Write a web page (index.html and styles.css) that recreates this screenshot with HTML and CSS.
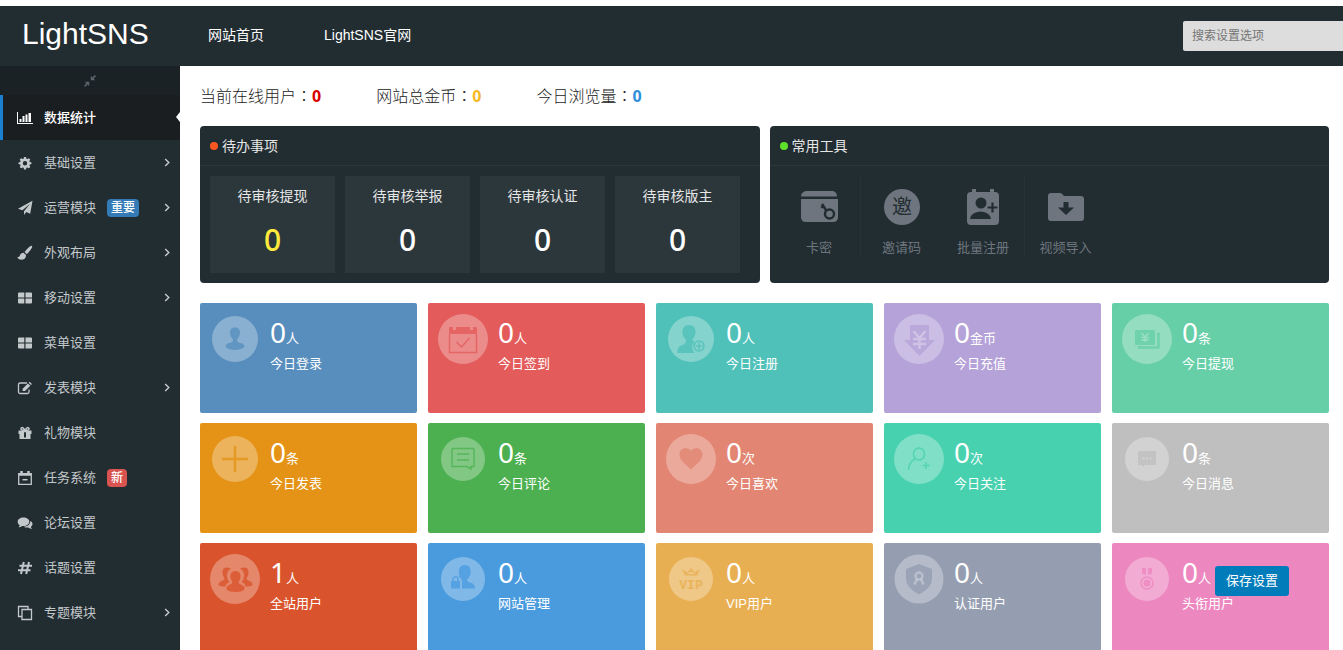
FILE: index.html
```html
<!DOCTYPE html>
<html lang="zh-CN">
<head>
<meta charset="utf-8">
<title>LightSNS</title>
<link rel="stylesheet" href="styles.css">
</head>
<body>
<div class="app">
  <header class="topbar">
    <a class="logo" href="#">LightSNS</a>
    <nav class="topnav">
      <a href="#">网站首页</a>
      <a href="#">LightSNS官网</a>
    </nav>
    <input class="search" type="text" placeholder="搜索设置选项" aria-label="搜索设置选项">
  </header>
  <div class="body">
    <aside class="sidebar">
      <button class="collapse" type="button" aria-label="收起菜单">
        <svg width="12" height="12" viewBox="0 0 12 12"><path fill="currentColor" d="M10.800 0 12 1.200 9.600 3.600 11.200 5.200H6.800V.8l1.600 1.600zM1.200 12 0 10.800l2.400-2.400L.8 6.800h4.400v4.400L3.600 9.600z"/></svg>
      </button>
      <nav class="menu">
        <a class="item active" href="#">
          <svg class="ico" viewBox="0 0 16 16"><path fill="currentColor" d="M0 2h1v11h15v1H0zM2.500 9h2v3h-2zM5.500 6h2v6h-2zM8.500 4.500h2V12h-2zM11.500 3h2.500v9h-2.500z"/></svg>
          <span>数据统计</span></a>
        <a class="item" href="#">
          <svg class="ico" viewBox="0 0 16 16"><path fill="currentColor" fill-rule="evenodd" d="M7 2h2l.4 1.700 1 .4 1.500-.9 1.400 1.400-.9 1.500.4 1L14.500 7.500v1.500l-1.700.4-.4 1 .9 1.500-1.400 1.400-1.500-.9-1 .4L9 14.500H7l-.4-1.700-1-.4-1.500.9-1.400-1.400.9-1.500-.4-1L1.500 9V7.500l1.700-.4.4-1-.9-1.500 1.400-1.400 1.500.9 1-.4zM8 6a2.200 2.200 0 1 0 0 4.400A2.200 2.200 0 0 0 8 6z"/></svg>
          <span>基础设置</span>
          <svg class="arrow" viewBox="0 0 6 10"><path d="m1 1 4 4-4 4"/></svg></a>
        <a class="item" href="#">
          <svg class="ico" viewBox="0 0 16 16"><path fill="currentColor" d="M15.500.7 13.200 13.800 9.200 12.100 7 15v-3.800l6-7.400-7.600 6.500L1 8.700z"/></svg>
          <span>运营模块</span><span class="badge blue">重要</span>
          <svg class="arrow" viewBox="0 0 6 10"><path d="m1 1 4 4-4 4"/></svg></a>
        <a class="item" href="#">
          <svg class="ico" viewBox="0 0 16 16"><path fill="currentColor" d="M13.700 1c1-.6 1.900.2 1.400 1.300-1 2.200-3 5-5.300 6.900L7.600 7C9.300 4.700 11.700 2.200 13.700 1zM6.800 7.900l2.200 2.200c.2 3-2 4.600-4.700 4.600-2 0-3.500-1.300-4-3 1.200.5 2 .2 2.500-1 .8-2 2.400-3 4-2.800z"/></svg>
          <span>外观布局</span>
          <svg class="arrow" viewBox="0 0 6 10"><path d="m1 1 4 4-4 4"/></svg></a>
        <a class="item" href="#">
          <svg class="ico" viewBox="0 0 16 16"><path fill="currentColor" d="M2 2.500h5.300v5H1V3.500q0-1 1-1zM8.500 2.500H14q1 0 1 1v4H8.500zM1 8.500h6.300v5H2q-1 0-1-1zM8.500 8.500H15v4q0 1-1 1H8.500z"/></svg>
          <span>移动设置</span>
          <svg class="arrow" viewBox="0 0 6 10"><path d="m1 1 4 4-4 4"/></svg></a>
        <a class="item" href="#">
          <svg class="ico" viewBox="0 0 16 16"><path fill="currentColor" d="M2 2.500h5.300v5H1V3.500q0-1 1-1zM8.500 2.500H14q1 0 1 1v4H8.500zM1 8.500h6.300v5H2q-1 0-1-1zM8.500 8.500H15v4q0 1-1 1H8.500z"/></svg>
          <span>菜单设置</span></a>
        <a class="item" href="#">
          <svg class="ico" viewBox="0 0 16 16"><path fill="none" stroke="currentColor" stroke-width="1.300" d="M10 3H3Q1.500 3 1.500 4.500v7.500Q1.500 13.500 3 13.500h7.500q1.500 0 1.500-1.500V9.500"/><path fill="currentColor" d="m12.600 1.700 2.400 2.400-1 1-2.400-2.400zM10.900 3.400l2.400 2.400L8 11.100H5.600V8.700z"/></svg>
          <span>发表模块</span>
          <svg class="arrow" viewBox="0 0 6 10"><path d="m1 1 4 4-4 4"/></svg></a>
        <a class="item" href="#">
          <svg class="ico" viewBox="0 0 16 16"><path fill="none" stroke="currentColor" stroke-width="1.500" d="M8 6C7 3 5.500 2.200 4.500 2.800S3.500 5.500 8 5.800C12.500 5.500 12.500 3.400 11.500 2.800S9 3 8 6z"/><path fill="currentColor" fill-rule="evenodd" d="M1.500 5.500h13V9h-1v5h-11V9h-1zM7 7v5.500h2V7z"/></svg>
          <span>礼物模块</span></a>
        <a class="item" href="#">
          <svg class="ico" viewBox="0 0 16 16"><path fill="none" stroke="currentColor" stroke-width="1.300" d="M1.700 3.700h12.600v10.600H1.700z"/><path fill="none" stroke="currentColor" stroke-width="2.500" d="M4.500 1v4M11.500 1v4M2 4.500h12"/><path stroke="currentColor" stroke-width="1.500" d="M5.500 9.700h5"/></svg>
          <span>任务系统</span><span class="badge red">新</span></a>
        <a class="item" href="#">
          <svg class="ico" viewBox="0 0 16 16"><path fill="currentColor" d="M6.500 2.500c3.300 0 5.800 1.900 5.800 4.200S9.800 11 6.500 11l-1.200-.1Q3.500 12.200 1.600 12.300q1-1 1-2.200C1.300 9.300.7 8 .7 6.700c0-2.300 2.500-4.200 5.800-4.200zM13.300 6c1.400.7 2.200 1.700 2.200 3s-.7 2-1.700 2.700q.1 1.100 1.200 2.200-2-.1-3.700-1.400c-1.800.2-3.400-.1-4.500-.8 3.500 0 6.700-2.200 6.500-5.700z"/></svg>
          <span>论坛设置</span></a>
        <a class="item" href="#">
          <svg class="ico" viewBox="0 0 16 16"><path fill="none" stroke="currentColor" stroke-width="2" d="M6.800 2 4 14M12 2 9.200 14M2.500 5.700H15M1 10.300h12.500"/></svg>
          <span>话题设置</span></a>
        <a class="item" href="#">
          <svg class="ico" viewBox="0 0 16 16"><path fill="none" stroke="currentColor" stroke-width="1.300" d="M5 4.500h9.500v10H5zM5 11.500H1.500v-10H11v3"/></svg>
          <span>专题模块</span>
          <svg class="arrow" viewBox="0 0 6 10"><path d="m1 1 4 4-4 4"/></svg></a>
      </nav>
    </aside>
    <main class="main">
      <div class="stats">
        <p>当前在线用户<span class="colon" lang="zh-TW">：</span><b class="c-red">0</b></p>
        <p>网站总金币<span class="colon" lang="zh-TW">：</span><b class="c-gold">0</b></p>
        <p>今日浏览量<span class="colon" lang="zh-TW">：</span><b class="c-blue">0</b></p>
      </div>
      <div class="panels">
        <section class="panel">
          <h2 class="todo-title">待办事项</h2>
          <div class="todos">
            <a class="todo" href="#">待审核提现<strong class="hot">0</strong></a>
            <a class="todo" href="#">待审核举报<strong>0</strong></a>
            <a class="todo" href="#">待审核认证<strong>0</strong></a>
            <a class="todo" href="#">待审核版主<strong>0</strong></a>
          </div>
        </section>
        <section class="panel">
          <h2 class="tool-title">常用工具</h2>
          <div class="tools">
            <a class="tool" href="#">
              <svg viewBox="0 0 40 40"><path fill="currentColor" d="M7 4h27q4 1 4 5.500H2Q2 5 7 4zM2 12h37v18q0 5-5 5H7q-5 0-5-5z"/><g fill="none" stroke="#222d32" stroke-width="2.500"><circle cx="30.500" cy="27" r="4.500"/><path d="m27.500 24-4.500-7M22 20.500l3-1.500"/></g></svg>
              <span>卡密</span></a>
            <a class="tool" href="#">
              <svg viewBox="0 0 40 40"><circle cx="20" cy="20" r="18" fill="currentColor"/><text class="seal" x="20" y="27" text-anchor="middle">邀</text></svg>
              <span>邀请码</span></a>
            <a class="tool" href="#">
              <svg viewBox="0 0 40 40"><path fill="currentColor" d="M9 2h4v3h14V2h4v3h1q4 0 4 4v25q0 4-4 4H8q-4 0-4-4V9q0-4 4-4h1z"/><circle cx="18" cy="16" r="5.500" fill="#222d32"/><path fill="#222d32" d="M7 32q1-7 10.500-7.500Q27 25 28 32z"/><path stroke="#222d32" stroke-width="2.200" d="M29.500 15.500v10M24.500 20.500h10"/></svg>
              <span>批量注册</span></a>
            <a class="tool" href="#">
              <svg viewBox="0 0 40 40"><path fill="currentColor" d="M5 6h9q2 0 3 2l1 1h17q3 0 3 3v19q0 3-3 3H5q-3 0-3-3V9q0-3 3-3z"/><path fill="#222d32" d="M17.500 15h5v5.500H28l-8 7.500-8-7.500h5.500z"/></svg>
              <span>视频导入</span></a>
          </div>
        </section>
      </div>
      <div class="cards">
        <a class="card login" href="#">
          <svg viewBox="0 0 50 50"><circle class="disc" cx="25" cy="25" r="23"/><path class="glyph" d="M25 13.500c3.500 0 5.300 2.500 5 6q-.5 3.500-3 6 0 3 3.500 3.500 4 1 4 3.700-3.500 3.300-9.500 3.300t-9.500-3.300q0-2.700 4-3.700 3.500-.5 3.500-3.500-2.500-2.500-3-6c-.3-3.500 1.500-6 5-6z"/></svg>
          <div><p><strong>0</strong>人</p><span>今日登录</span></div></a>
        <a class="card sign" href="#">
          <svg viewBox="0 0 50 50"><circle class="disc" cx="25" cy="25" r="25"/><path class="glyph" d="M12 13h3v3h3v-3h14v3h3v-3h3q1 0 1 1v6H11v-6q0-1 1-1z"/><path class="line" d="M11.500 20v18.500h27V20M18.500 28l5 5 8-9"/></svg>
          <div><p><strong>0</strong>人</p><span>今日签到</span></div></a>
        <a class="card register" href="#">
          <svg viewBox="0 0 50 50"><circle class="disc" cx="25" cy="25" r="23"/><path class="glyph" d="M23 11c4.500 0 7 3 6.500 8q-.5 4-3 6 0 2 2 3a7 7 0 0 0 .5 11H11.500q-1-6 4-7.500 5-1.500 4.500-6-3-2-3.500-6.500C16 14 18.500 11 23 11z"/><circle class="line" cx="33" cy="32" r="5"/><path class="line" d="M33 28.500v7M29.500 32h7"/></svg>
          <div><p><strong>0</strong>人</p><span>今日注册</span></div></a>
        <a class="card recharge" href="#">
          <svg viewBox="0 0 50 50"><circle class="disc" cx="25" cy="25" r="25"/><path class="glyph" d="M17 11h17q1 0 1 1v14h6L25.500 42 10 26h6V12q0-1 1-1z"/><path class="yen" d="m19.500 17 6 7 6-7M25.500 24v11M19 25h13M19 30h13"/></svg>
          <div><p><strong>0</strong>金币</p><span>今日充值</span></div></a>
        <a class="card withdraw" href="#">
          <svg viewBox="0 0 50 50"><circle class="disc" cx="25" cy="25" r="25"/><rect class="glyph" x="13" y="16" width="20" height="15" rx="1"/><path class="line thick" d="M35 20h1.500v13.500H17V32"/><path class="yen thin" d="m19.500 19 3.500 4 3.500-4M23 23v5M19.500 23.500h7M19.500 26h7"/></svg>
          <div><p><strong>0</strong>条</p><span>今日提现</span></div></a>
        <a class="card publish" href="#">
          <svg viewBox="0 0 50 50"><circle class="disc" cx="25" cy="25" r="23"/><path class="line thick" d="M25 12v26M12 25h26"/></svg>
          <div><p><strong>0</strong>条</p><span>今日发表</span></div></a>
        <a class="card comment" href="#">
          <svg viewBox="0 0 50 50"><circle class="disc" cx="25" cy="25" r="22"/><path class="line" d="M15 14.500h20q1 0 1 1v17h-3v2.500l-4-2.500H14v-17q0-1 1-1zM19 20h12M19 26h12"/></svg>
          <div><p><strong>0</strong>条</p><span>今日评论</span></div></a>
        <a class="card like" href="#">
          <svg viewBox="0 0 50 50"><circle class="disc" cx="25" cy="25" r="25"/><path class="glyph" d="M25 17c2-4 11-4 11.500 3 .4 6-6 10-11.500 15.500C19.500 30 13 26 13.500 20c.5-7 9.500-7 11.500-3z"/></svg>
          <div><p><strong>0</strong>次</p><span>今日喜欢</span></div></a>
        <a class="card follow" href="#">
          <svg viewBox="0 0 50 50"><circle class="disc" cx="25" cy="25" r="25"/><ellipse class="line" cx="25" cy="20" rx="5.500" ry="6"/><path class="line" d="M21 25q-6 3-6.500 11M32 28v7M28.500 31.500h7"/></svg>
          <div><p><strong>0</strong>次</p><span>今日关注</span></div></a>
        <a class="card message" href="#">
          <svg viewBox="0 0 50 50"><circle class="disc" cx="25" cy="25" r="22"/><path class="glyph" d="M17 17h16q1 0 1 1v12q0 1-1 1H23l-2 2-1-2h-3q-1 0-1-1V18q0-1 1-1z"/><path class="yen thin" stroke-dasharray="2 1.500" d="M20.500 24.500h9"/></svg>
          <div><p><strong>0</strong>条</p><span>今日消息</span></div></a>
        <a class="card users" href="#">
          <svg viewBox="0 0 50 50"><circle class="disc" cx="25" cy="25" r="25"/><path class="glyph" d="M25.500 17c4 0 5.500 3 5 6.500q-.5 3-2 4.500 0 2 3 2.700 3.500 1.300 3 4.800-3 2.500-9 2.500t-9-2.500q-.5-3.500 3-4.800 3-.7 3-2.700-1.500-1.500-2-4.500c-.5-3.500 1-6.500 5-6.500zM21 14.500q-4.500 2.500-4 8 .5 4 2.500 5.500-3.500 1-4 4.500-5 0-7-1.500 0-3 3-4 3-.7 3-2.500-2.500-3-2-7 .8-6 8.500-3zM30 14.500q4.500 2.500 4 8-.5 4-2.500 5.500 3.500 1 4 4.500 5 0 7-1.500 0-3-3-4-3-.7-3-2.500 2.500-3 2-7-.8-6-8.500-3z"/></svg>
          <div><p><strong>1</strong>人</p><span>全站用户</span></div></a>
        <a class="card admin" href="#">
          <svg viewBox="0 0 50 50"><circle class="disc" cx="25" cy="25" r="22"/><path class="glyph" d="M27 11c4 0 6 3 5.500 7q1 1-.5 3-1 3-3 4.500.5 3 4.500 3.500 3.500 1 3.500 5.500H24v-8q-1-3-3.500-4 .5-1 1-2-1.500-1-.5-2.500C20.500 14 23 11 27 11zM13 27h9v7.500h-9z"/><path class="line" d="M15 27v-2.500q2.500-3.500 5 0V27"/></svg>
          <div><p><strong>0</strong>人</p><span>网站管理</span></div></a>
        <a class="card vip" href="#">
          <svg viewBox="0 0 50 50"><circle class="disc" cx="25" cy="25" r="22"/><path class="glyph" d="m16 15 5.500 3.500L25 14l3.500 4.500L34 15l-3 6.500H19zm4.500 5h9L25 17.500z" fill-rule="evenodd"/><text class="glyph viptext" x="25" y="35" text-anchor="middle">VIP</text></svg>
          <div><p><strong>0</strong>人</p><span>VIP用户</span></div></a>
        <a class="card verify" href="#">
          <svg viewBox="0 0 50 50"><circle class="disc" cx="25" cy="25" r="24.500"/><path class="glyph" d="m25 10 13 5v10q0 9-13 15.500Q12 34 12 25V15z"/><circle class="yen" cx="25" cy="22" r="3.500"/><path class="yen" d="m23 25-2.500 5.500M27 25l2.500 5.500"/></svg>
          <div><p><strong>0</strong>人</p><span>认证用户</span></div></a>
        <a class="card title" href="#">
          <svg viewBox="0 0 50 50"><circle class="disc" cx="25" cy="25" r="22"/><path class="glyph" d="M20 14h4v7l-4-1.500zM26 14h4v5.500L26 21z"/><circle class="line" cx="25" cy="29" r="6"/><circle class="glyph" cx="25" cy="29" r="3.500"/></svg>
          <div><p><strong>0</strong>人</p><span>头衔用户</span></div></a>
      </div>
    </main>
  </div>
</div>
<button class="save" type="button">保存设置</button>
</body>
</html>
```
FILE: styles.css
```css
* { box-sizing: border-box; }
body, p, h2 { margin: 0; }
body {
  font-family: "Liberation Sans", "Noto Sans CJK SC", sans-serif;
  font-size: 13px;
  line-height: 20px;
  background: #fff;
}
a { color: inherit; text-decoration: none; }
button, input { font: inherit; border: 0; }

.app {
  height: 100vh;
  padding-top: 6px;
  display: flex;
  flex-direction: column;
  overflow: hidden;
}
.topbar {
  flex: none;
  height: 60px;
  display: flex;
  align-items: center;
  background: #222d32;
  color: #fff;
}
.logo {
  width: 178px;
  padding: 0 0 4px 22px;
  font-size: 30px;
  line-height: 36px;
}
.topnav {
  flex: 1;
  display: flex;
  gap: 60px;
  padding: 0 0 2px 30px;
  font-size: 14px;
}
.search {
  width: 160px;
  height: 30px;
  padding: 0 9px;
  background: #ddd;
  border-radius: 2px 0 0 2px;
  font-size: 12px;
}
.search::placeholder { color: #757575; opacity: 1; }

.body { flex: 1; min-height: 0; display: flex; }
.sidebar { flex: none; width: 180px; background: #222d32; }
.collapse {
  width: 100%;
  height: 29px;
  padding: 0;
  display: flex;
  align-items: center;
  justify-content: center;
  background: #1a2226;
  color: #5b6468;
}
.item {
  position: relative;
  height: 45px;
  display: flex;
  align-items: center;
  padding: 0 10px 0 14px;
  border-left: 3px solid transparent;
  color: #c3c8ca;
}
.item.active { background: #1a1e21; border-color: #1a7fd0; color: #fff; font-weight: 500; }
.item.active::after {
  content: "";
  position: absolute;
  top: 17px;
  right: 0;
  border: 5px solid transparent;
  border-right: 4px solid #fff;
  border-left: 0;
}
.ico { width: 16px; height: 16px; margin-right: 11px; }
.arrow { width: 6px; height: 9px; margin-left: auto; }
.arrow path { fill: none; stroke: currentColor; stroke-width: 1.6; }
.badge {
  margin-left: 11px;
  padding: 0 4px;
  border-radius: 4px;
  font-size: 12px;
  line-height: 18px;
  font-weight: 500;
  color: #fff;
}
.badge.blue { background: #337ab7; }
.badge.red { background: #d9534f; }

.main { flex: 1; min-width: 0; padding: 20px 14px 0 20px; }
.stats {
  display: flex;
  gap: 55px;
  height: 40px;
  font-size: 16px;
  line-height: 18px;
  font-weight: 300;
  color: #222;
}
.stats b { font-family: "Noto Sans", sans-serif; font-weight: 700; }
.colon { font-family: "Noto Sans CJK TC", sans-serif; }
.c-red { color: #d80000; }
.c-gold { color: #f5b928; }
.c-blue { color: #2d8fdc; }

.panels { display: grid; grid-template-columns: 1fr 1fr; gap: 10px; }
.panel { background: #222d32; border-radius: 4px; color: #e6e6e6; }
.panel h2 {
  height: 40px;
  display: flex;
  align-items: center;
  gap: 4px;
  padding-left: 10px;
  border-bottom: 1px solid #2c373c;
  font-size: 14px;
  font-weight: 400;
}
.panel h2::before { content: ""; width: 8px; height: 8px; border-radius: 50%; background: #ff5722; }
.panel .tool-title::before { background: #5fe02a; }
.todos { display: grid; grid-template-columns: repeat(4, 125px); gap: 10px; padding: 10px; }
.todo {
  height: 97px;
  padding-top: 10px;
  display: flex;
  flex-direction: column;
  align-items: center;
  gap: 14px;
  background: #2c373c;
  font-size: 14px;
}
.todo strong { font: 500 30px/40px "Noto Sans", sans-serif; color: #fff; }
.todo .hot { color: #ffeb3b; }
.tools { display: flex; padding: 10px 9px; color: #6e757e; }
.tool {
  width: 82px;
  height: 82px;
  display: flex;
  flex-direction: column;
  align-items: center;
  gap: 11px;
}
.tool:nth-child(odd) { border-right: 1px solid #263237; }
.tool svg { width: 40px; height: 40px; margin-top: 11px; flex: none; }
.seal { font-size: 20px; fill: #222d32; }

.cards {
  display: grid;
  grid-template-columns: repeat(5, 1fr);
  gap: 10px 11px;
  margin-top: 20px;
}
.card {
  height: 110px;
  display: flex;
  gap: 10px;
  padding: 11px 10px;
  border-radius: 2px;
  background: currentColor;
}
.card > svg { width: 50px; height: 50px; flex: none; }
.card div { color: #fff; }
.card p { height: 40px; line-height: 36px; }
.card strong { font: 400 28px/36px "Noto Sans", sans-serif; }
.card span { display: block; }
.disc { fill: #fff; opacity: .3; }
.glyph { fill: currentColor; opacity: .8; }
.line { fill: none; stroke: currentColor; stroke-width: 1.5; opacity: .8; }
.line.thick { stroke-width: 2.5; }
.yen { fill: none; stroke: #fff; stroke-opacity: .3; stroke-width: 2.5; }
.yen.thin { stroke-width: 1.3; }
.viptext { font: 700 13px "Liberation Mono", monospace; }

.login { color: #578ebe; }
.sign { color: #e35b5a; }
.register { color: #4fc1b8; }
.recharge { color: #b5a2d8; }
.withdraw { color: #66cfa7; }
.publish { color: #e49316; }
.comment { color: #4cb050; }
.like { color: #e28572; }
.follow { color: #48d1af; }
.message { color: #bfbfbf; }
.users { color: #d9542c; }
.admin { color: #4a9bde; }
.vip { color: #e8af52; }
.verify { color: #959eb1; }
.title { color: #ed87bf; }

.save {
  position: fixed;
  right: 54px;
  bottom: 54px;
  height: 30px;
  padding: 0 11px;
  border-radius: 3px;
  background: #007cba;
  color: #fff;
}
```
